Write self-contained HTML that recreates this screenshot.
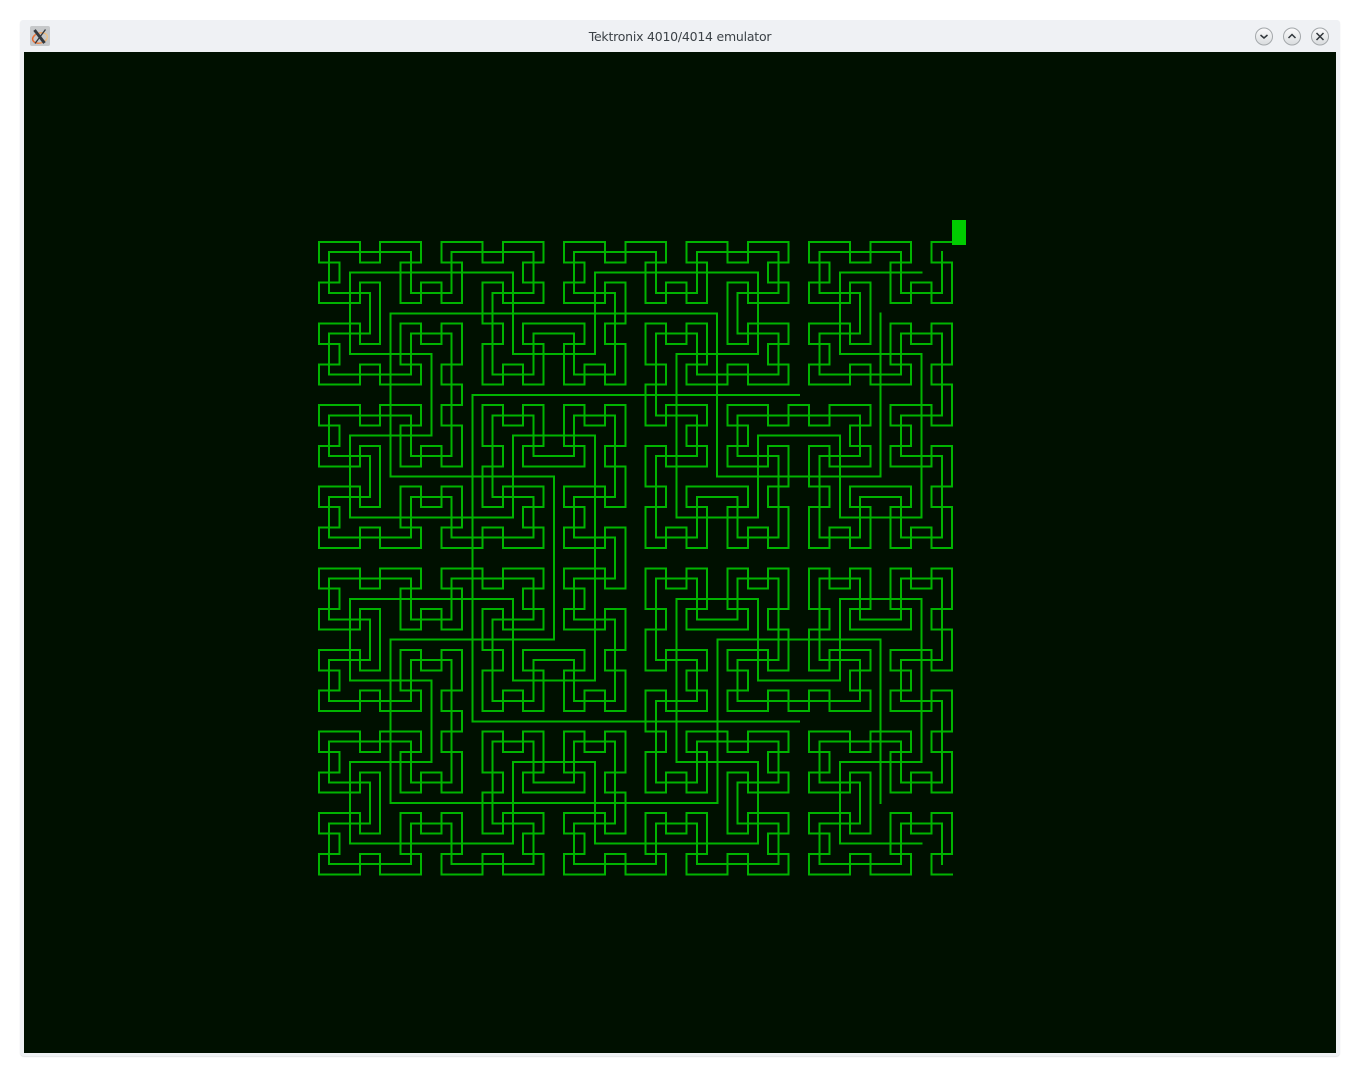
<!DOCTYPE html>
<html>
<head>
<meta charset="utf-8">
<title>Tektronix 4010/4014 emulator</title>
<style>
html,body{margin:0;padding:0;width:1360px;height:1076px;background:#fff;overflow:hidden}
#win{position:absolute;left:20px;top:20px;width:1320px;height:1036px;background:#eff1f4;border-radius:3px 3px 4px 4px;box-shadow:0 1px 1px rgba(120,130,140,.22)}
#title{position:absolute;left:0;right:0;top:9px;height:16px;text-align:center;font:12.5px/16px "DejaVu Sans","Liberation Sans",sans-serif;letter-spacing:-.23px;color:#3c4247}
#canvas{position:absolute;left:24px;top:52px;width:1312px;height:1001px;background:#001000}
svg{position:absolute;left:0;top:0}
</style>
</head>
<body>
<div id="win"><div id="title">Tektronix 4010/4014 emulator</div></div>
<div id="canvas"></div>
<svg width="1360" height="1076" viewBox="0 0 1360 1076" xmlns="http://www.w3.org/2000/svg">
<defs>
<linearGradient id="btn" x1="0" y1="0" x2="0" y2="1"><stop offset="0" stop-color="#fbfbfc"/><stop offset="1" stop-color="#d9dcde"/></linearGradient>
<linearGradient id="ring" x1="0" y1="0" x2="1" y2="0"><stop offset="0" stop-color="#e8652a"/><stop offset="1" stop-color="#ecc58a"/></linearGradient>
<path id="a1" d="M0 0h-1v1h1" vector-effect="non-scaling-stroke"/>
<g id="a2">
<use href="#a1" transform="matrix(0,-1,-1,0,0,0)"/>
<path d="M-1 0h-1" vector-effect="non-scaling-stroke"/>
<use href="#a1" transform="translate(-2,0)"/>
<path d="M-2 1v1" vector-effect="non-scaling-stroke"/>
<use href="#a1" transform="translate(-2,2)"/>
<path d="M-2 3h1" vector-effect="non-scaling-stroke"/>
<use href="#a1" transform="translate(-1,3) matrix(0,1,1,0,0,0)"/>
</g>
<g id="a3">
<use href="#a2" transform="matrix(0,-1,-1,0,0,0)"/>
<path d="M-3 0h-1" vector-effect="non-scaling-stroke"/>
<use href="#a2" transform="translate(-4,0)"/>
<path d="M-4 3v1" vector-effect="non-scaling-stroke"/>
<use href="#a2" transform="translate(-4,4)"/>
<path d="M-4 7h1" vector-effect="non-scaling-stroke"/>
<use href="#a2" transform="translate(-3,7) matrix(0,1,1,0,0,0)"/>
</g>
<g id="a4">
<use href="#a3" transform="matrix(0,-1,-1,0,0,0)"/>
<path d="M-7 0h-1" vector-effect="non-scaling-stroke"/>
<use href="#a3" transform="translate(-8,0)"/>
<path d="M-8 7v1" vector-effect="non-scaling-stroke"/>
<use href="#a3" transform="translate(-8,8)"/>
<path d="M-8 15h1" vector-effect="non-scaling-stroke"/>
<use href="#a3" transform="translate(-7,15) matrix(0,1,1,0,0,0)"/>
</g>
<g id="a5">
<use href="#a4" transform="matrix(0,-1,-1,0,0,0)"/>
<path d="M-15 0h-1" vector-effect="non-scaling-stroke"/>
<use href="#a4" transform="translate(-16,0)"/>
<path d="M-16 15v1" vector-effect="non-scaling-stroke"/>
<use href="#a4" transform="translate(-16,16)"/>
<path d="M-16 31h1" vector-effect="non-scaling-stroke"/>
<use href="#a4" transform="translate(-15,31) matrix(0,1,1,0,0,0)"/>
</g>
</defs>

<g fill="none" stroke="#00b400" stroke-width="2" stroke-linecap="square" stroke-linejoin="miter" shape-rendering="crispEdges">
<use href="#a1" transform="translate(799,395) scale(326.7,326.4)"/>
<use href="#a2" transform="translate(880.6,313.3) scale(163.35,163.2)"/>
<use href="#a3" transform="translate(921.5,272.5) scale(81.67,81.6)"/>
<use href="#a4" transform="translate(941.8,252.1) scale(40.84,40.8)"/>
<use href="#a5" transform="translate(952,241.9) scale(20.42,20.4)"/>
</g>
<rect x="952" y="220" width="14" height="25" fill="#00cc00"/>

<!-- window icon -->
<rect x="30" y="26" width="20" height="20" rx="2" fill="#c6c8ca"/>
<ellipse cx="40" cy="38" rx="7.500" ry="5" fill="none" stroke="url(#ring)" stroke-width="1.500" transform="rotate(-15 40 38)"/>
<path d="M34.500 30L44.500 43" stroke="#33383e" stroke-width="3" fill="none"/>
<path d="M45.500 29.500L35 43.500" stroke="#33383e" stroke-width="1.300" fill="none"/>

<!-- window buttons -->
<g>
<circle cx="1264" cy="36.500" r="8.500" fill="url(#btn)" stroke="#a4a8ab" stroke-width="1"/>
<path d="M1260.500 35l3.500 3 3.500-3" fill="none" stroke="#31363b" stroke-width="1.500"/>
<circle cx="1292" cy="36.500" r="8.500" fill="url(#btn)" stroke="#a4a8ab" stroke-width="1"/>
<path d="M1288.500 38l3.500-3.500 3.500 3.500" fill="none" stroke="#31363b" stroke-width="1.500"/>
<circle cx="1320" cy="36.500" r="8.500" fill="url(#btn)" stroke="#a4a8ab" stroke-width="1"/>
<path d="M1316.500 33l7 7M1323.500 33l-7 7" fill="none" stroke="#31363b" stroke-width="1.500"/>
</g>
</svg>
</body>
</html>
